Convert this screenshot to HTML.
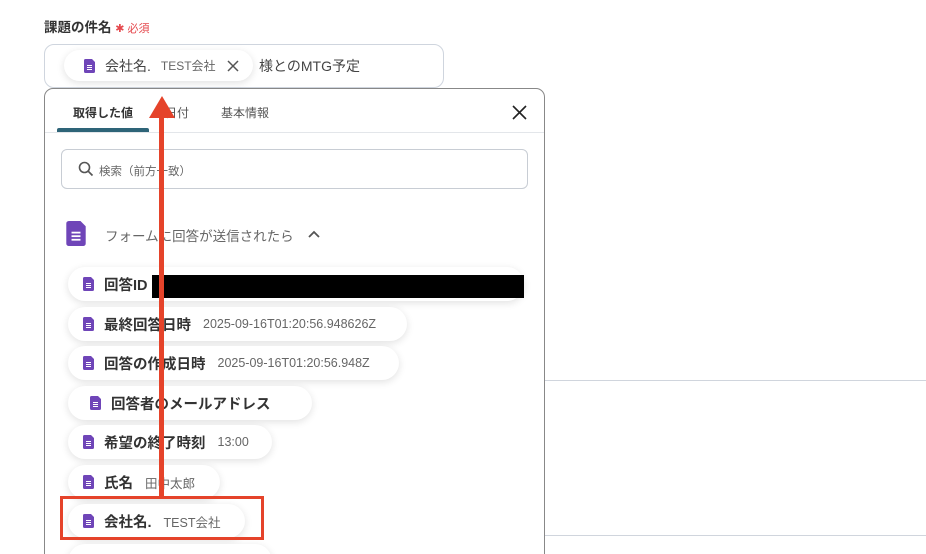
<!DOCTYPE html>
<html style="width:926px;height:554px;overflow:hidden"><head><meta charset="utf-8"><style>
*{margin:0;padding:0;box-sizing:border-box}
body{width:926px;height:554px;overflow:hidden;background:#fff;font-family:"Liberation Sans","Noto Sans CJK JP",sans-serif;color:#333;position:relative}
.abs{position:absolute}
.chip{position:absolute;left:68px;height:34px;border-radius:17px;background:#fff;box-shadow:0 2px 8px rgba(0,0,0,.12);display:flex;align-items:center;padding-left:15px;font-size:14.5px;font-weight:bold;color:#333;white-space:nowrap}
.chip .v{font-weight:normal;color:#666;font-size:12.5px;margin-left:12px}
.ic{width:11px;height:14px;margin-right:10px;flex:none}
</style></head><body>
<svg width="0" height="0" style="position:absolute"><defs><symbol id="doc" viewBox="0 0 11 14"><path d="M1.5 0H8L11 3V12.5A1.5 1.5 0 0 1 9.5 14H1.5A1.5 1.5 0 0 1 0 12.5V1.5A1.5 1.5 0 0 1 1.5 0Z" fill="#6f45b8"/><g fill="#fff"><rect x="3" y="6" width="5" height="1"/><rect x="3" y="8" width="5" height="1"/><rect x="3" y="10" width="5" height="1"/></g></symbol></defs></svg>

<div class="abs" style="left:44px;top:16px;font-size:13.5px;font-weight:bold;color:#333">課題の件名 <span style="color:#e5484d;font-weight:normal;font-size:11px">✱ 必須</span></div>
<div class="abs" style="left:44px;top:44px;width:400px;height:44px;border:1px solid #cfd5de;border-radius:10px"></div>
<div class="abs" style="left:64px;top:50px;width:189px;height:31px;border-radius:16px;background:#fff;box-shadow:0 2px 8px rgba(0,0,0,.12);display:flex;align-items:center;padding-left:20px;font-size:14px;color:#444;white-space:nowrap"><svg class="ic"><use href="#doc"/></svg>会社名.<span style="font-size:12px;color:#666;margin-left:10px">TEST会社</span><svg style="margin-left:11px" width="12" height="12" viewBox="0 0 12 12"><path d="M1 1L11 11M11 1L1 11" stroke="#555" stroke-width="1.5"/></svg></div>
<div class="abs" style="left:259px;top:56px;font-size:14px;color:#444">様とのMTG予定</div>

<div class="abs" style="left:544px;top:380px;width:382px;height:1px;background:#d0d5dd"></div>
<div class="abs" style="left:544px;top:535px;width:382px;height:1px;background:#d0d5dd"></div>

<div class="abs" style="left:44px;top:88px;width:501px;height:480px;border:1px solid #888;border-radius:9px;background:#fff"></div>
<div class="abs" style="left:73px;top:104px;font-size:12px;font-weight:bold;color:#333">取得した値</div>
<div class="abs" style="left:165px;top:104px;font-size:12px;color:#555">日付</div>
<div class="abs" style="left:221px;top:104px;font-size:12px;color:#555">基本情報</div>
<svg class="abs" style="left:512px;top:105px" width="15" height="15" viewBox="0 0 15 15"><path d="M1 1L14 14M14 1L1 14" stroke="#222" stroke-width="1.6"/></svg>
<div class="abs" style="left:45px;top:132px;width:499px;height:1px;background:#e3e6ea"></div>
<div class="abs" style="left:57px;top:128px;width:92px;height:4px;background:#2e6478;border-radius:2px 2px 0 0"></div>
<div class="abs" style="left:61px;top:149px;width:467px;height:40px;border:1px solid #c8cdd4;border-radius:6px"></div>
<svg class="abs" style="left:78px;top:161px" width="16" height="16" viewBox="0 0 16 16"><circle cx="6.5" cy="6.5" r="5" fill="none" stroke="#555" stroke-width="1.6"/><path d="M10.3 10.3L14.5 14.5" stroke="#555" stroke-width="1.7"/></svg>
<div class="abs" style="left:99px;top:163px;font-size:11.5px;color:#666">検索（前方一致）</div>
<svg class="abs" style="left:66px;top:221px" width="20" height="25" viewBox="0 0 11 14"><use href="#doc"/></svg>
<div class="abs" style="left:105px;top:225px;font-size:13.5px;color:#666">フォームに回答が送信されたら</div>
<svg class="abs" style="left:308px;top:230px" width="12" height="8" viewBox="0 0 12 8"><path d="M1 7L6 2L11 7" fill="none" stroke="#555" stroke-width="1.8"/></svg>

<div class="chip" style="top:267px;width:456px"><svg class="ic"><use href="#doc"/></svg>回答ID</div>
<div class="abs" style="left:152px;top:275px;width:372px;height:23px;background:#000"></div>
<div class="chip" style="top:307px;width:339px"><svg class="ic"><use href="#doc"/></svg>最終回答日時<span class="v">2025-09-16T01:20:56.948626Z</span></div>
<div class="chip" style="top:346px;width:331px"><svg class="ic"><use href="#doc"/></svg>回答の作成日時<span class="v">2025-09-16T01:20:56.948Z</span></div>
<div class="chip" style="top:386px;width:244px;padding-left:22px"><svg class="ic"><use href="#doc"/></svg>回答者のメールアドレス</div>
<div class="chip" style="top:425px;width:204px"><svg class="ic"><use href="#doc"/></svg>希望の終了時刻<span class="v">13:00</span></div>
<div class="chip" style="top:465px;width:152px"><svg class="ic"><use href="#doc"/></svg>氏名<span class="v">田中太郎</span></div>
<div class="chip" style="top:504px;width:177px"><svg class="ic"><use href="#doc"/></svg>会社名.<span class="v">TEST会社</span></div>
<div class="chip" style="top:544px;width:204px"></div>

<div class="abs" style="left:60px;top:496px;width:204px;height:44px;border:3px solid #e5432a"></div>
<div class="abs" style="left:159px;top:115px;width:5px;height:384px;background:#e5432a"></div>
<svg class="abs" style="left:148px;top:96px" width="28" height="22" viewBox="0 0 28 22"><path d="M14 0L27 22H1Z" fill="#e5432a"/></svg>
</body></html>
